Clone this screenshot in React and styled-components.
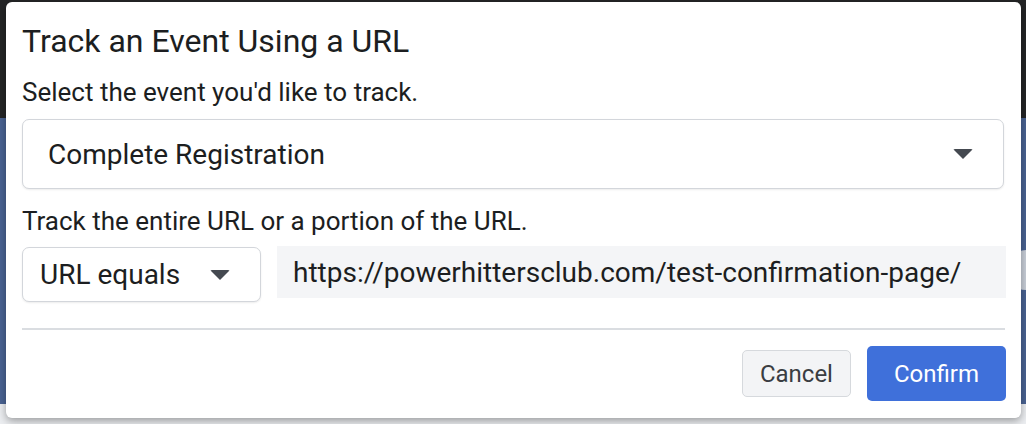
import React from "react";
import styled, { createGlobalStyle } from "styled-components";

const Global = createGlobalStyle`
  html, body { margin: 0; padding: 0; }
  body {
    width: 1026px;
    height: 424px;
    overflow: hidden;
    font-family: Roboto, "Liberation Sans", Arial, sans-serif;
    background: #eceef1;
  }
`;

const Backdrop = styled.div`
  position: relative;
  width: 1026px;
  height: 424px;
  display: flex;
  flex-direction: column;
`;

const TopBar = styled.div`
  height: 118px;
  background: #242526;
`;

const BlueBand = styled.div`
  height: 286px;
  background: #4a6393;
`;

const PeekingButton = styled.div`
  position: absolute;
  left: 1006px;
  top: 250px;
  width: 40px;
  height: 40px;
  border-radius: 50%;
  background: #c9cfd9;
`;

const Dialog = styled.div`
  position: absolute;
  left: 6px;
  top: 2px;
  width: 1015px;
  height: 416px;
  box-sizing: border-box;
  background: #ffffff;
  border-radius: 6px;
  box-shadow: 0 3px 8px rgba(0, 0, 0, 0.35);
  padding: 0 16px 0 16px;
  display: flex;
  flex-direction: column;
  color: #1c1e21;
`;

const Title = styled.h1`
  margin: 0;
  padding-top: 20px;
  font-size: 32px;
  font-weight: 400;
  line-height: 38px;
  letter-spacing: 0;
`;

const Label = styled.div`
  font-size: 26px;
  line-height: 28px;
  margin-top: ${(p) => p.$top}px;
`;

const Select = styled.div`
  box-sizing: border-box;
  display: flex;
  align-items: center;
  justify-content: space-between;
  border: 1px solid #d3d6db;
  border-radius: 7px;
  background: #fff;
  box-shadow: 0 1px 2px rgba(0, 0, 0, 0.08);
  font-size: 28px;
  width: ${(p) => p.$w};
  height: ${(p) => p.$h}px;
  padding: ${(p) => p.$pad};
  margin-top: ${(p) => p.$top || 0}px;
  flex-shrink: 0;
`;

const Caret = styled.span`
  width: 0;
  height: 0;
  border-left: 10px solid transparent;
  border-right: 10px solid transparent;
  border-top: 10px solid #444950;
  border-radius: 2px;
`;

const Row = styled.div`
  display: flex;
  gap: 16px;
  margin-top: 12px;
  align-items: flex-start;
`;

const UrlField = styled.div`
  flex: 1;
  height: 52px;
  margin-top: -1px;
  background: #f4f5f7;
  display: flex;
  align-items: center;
  padding-left: 16px;
  font-size: 28px;
  margin-right: -1px;
  white-space: nowrap;
`;

const Divider = styled.hr`
  margin: 26px 0 0 0;
  border: none;
  height: 2px;
  background: #dadde1;
`;

const Footer = styled.div`
  display: flex;
  justify-content: flex-end;
  align-items: center;
  gap: 16px;
  margin-top: 16px;
  margin-right: -1px;
`;

const Button = styled.button`
  font-family: inherit;
  font-size: 24px;
  border-radius: 5px;
  cursor: pointer;
  box-sizing: border-box;
  height: ${(p) => (p.$primary ? 55 : 47)}px;
  padding: 0 ${(p) => (p.$primary ? 27 : 17)}px;
  background: ${(p) => (p.$primary ? "#3f70da" : "#f3f4f6")};
  color: ${(p) => (p.$primary ? "#ffffff" : "#3a3d42")};
  border: ${(p) => (p.$primary ? "none" : "1.5px solid #d6d9dd")};
`;

export default function App() {
  return (
    <>
      <Global />
      <Backdrop>
        <TopBar />
        <BlueBand />
        <PeekingButton />
        <Dialog>
          <Title>Track an Event Using a URL</Title>
          <Label $top={18}>Select the event you'd like to track.</Label>
          <Select $w="982px" $h={70} $pad="0 30px 0 25px" $top={13}>
            <span>Complete Registration</span>
            <Caret />
          </Select>
          <Label $top={18}>Track the entire URL or a portion of the URL.</Label>
          <Row>
            <Select $w="239px" $h={55} $pad="0 30px 0 17px">
              <span>URL equals</span>
              <Caret />
            </Select>
            <UrlField>https://powerhittersclub.com/test-confirmation-page/</UrlField>
          </Row>
          <Divider />
          <Footer>
            <Button>Cancel</Button>
            <Button $primary>Confirm</Button>
          </Footer>
        </Dialog>
      </Backdrop>
    </>
  );
}
